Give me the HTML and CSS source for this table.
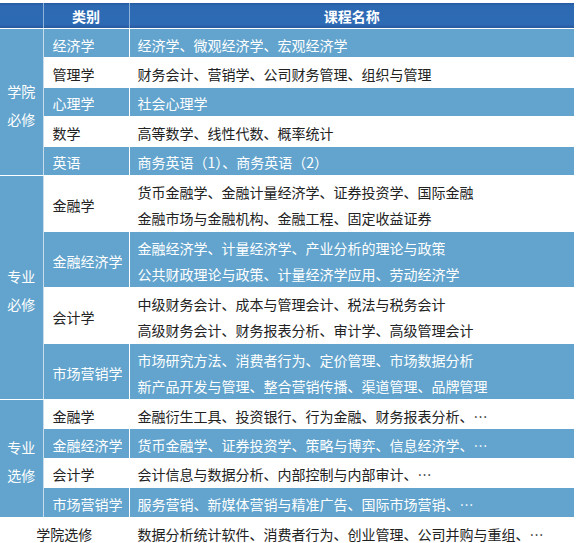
FILE: index.html
```html
<!DOCTYPE html>
<html lang="zh-CN">
<head>
<meta charset="utf-8">
<link rel="stylesheet" href="styles.css">
</head>
<body>
<table class="courses">
  <colgroup>
    <col class="c1"><col class="c2"><col class="c3">
  </colgroup>
  <thead>
    <tr class="head">
      <th></th><th>类别</th><th>课程名称</th>
    </tr>
  </thead>
  <tbody>
    <tr class="blue one">
      <td class="group" rowspan="5">学院<br>必修</td>
      <td class="cat">经济学</td><td class="list">经济学、微观经济学、宏观经济学</td>
    </tr>
    <tr class="white one">
      <td class="cat">管理学</td><td class="list">财务会计、营销学、公司财务管理、组织与管理</td>
    </tr>
    <tr class="blue one">
      <td class="cat">心理学</td><td class="list">社会心理学</td>
    </tr>
    <tr class="white one">
      <td class="cat">数学</td><td class="list">高等数学、线性代数、概率统计</td>
    </tr>
    <tr class="blue one">
      <td class="cat">英语</td><td class="list">商务英语（1）、商务英语（2）</td>
    </tr>

    <tr class="white two">
      <td class="group" rowspan="4">专业<br>必修</td>
      <td class="cat">金融学</td><td class="list">货币金融学、金融计量经济学、证券投资学、国际金融<br>金融市场与金融机构、金融工程、固定收益证券</td>
    </tr>
    <tr class="blue two">
      <td class="cat">金融经济学</td><td class="list">金融经济学、计量经济学、产业分析的理论与政策<br>公共财政理论与政策、计量经济学应用、劳动经济学</td>
    </tr>
    <tr class="white two">
      <td class="cat">会计学</td><td class="list">中级财务会计、成本与管理会计、税法与税务会计<br>高级财务会计、财务报表分析、审计学、高级管理会计</td>
    </tr>
    <tr class="blue two">
      <td class="cat">市场营销学</td><td class="list">市场研究方法、消费者行为、定价管理、市场数据分析<br>新产品开发与管理、整合营销传播、渠道管理、品牌管理</td>
    </tr>

    <tr class="white one">
      <td class="group" rowspan="4">专业<br>选修</td>
      <td class="cat">金融学</td><td class="list">金融衍生工具、投资银行、行为金融、财务报表分析、…</td>
    </tr>
    <tr class="blue one">
      <td class="cat">金融经济学</td><td class="list">货币金融学、证券投资学、策略与博弈、信息经济学、…</td>
    </tr>
    <tr class="white one">
      <td class="cat">会计学</td><td class="list">会计信息与数据分析、内部控制与内部审计、…</td>
    </tr>
    <tr class="blue one">
      <td class="cat">市场营销学</td><td class="list">服务营销、新媒体营销与精准广告、国际市场营销、…</td>
    </tr>

    <tr class="white one last">
      <td class="span" colspan="2">学院选修</td><td class="list">数据分析统计软件、消费者行为、创业管理、公司并购与重组、…</td>
    </tr>
  </tbody>
</table>
</body>
</html>
```

FILE: styles.css
```css
html, body {
  margin: 0;
  padding: 0;
  background: #ffffff;
}

body {
  padding-top: 3px;
  font-family: "Noto Sans CJK SC", "Noto Sans", sans-serif;
  font-size: 14px;
}

.courses {
  width: 574px;
  border-collapse: collapse;
  table-layout: fixed;
}

.c1 { width: 43px; }
.c2 { width: 86px; }
.c3 { width: 445px; }

.courses th,
.courses td {
  padding: 0;
  border: 1px solid #ffffff;
  vertical-align: middle;
}

.head th {
  height: 25px;
  color: #ffffff;
  font-weight: bold;
  font-size: 14px;
  text-align: center;
  line-height: 20px;
  background: linear-gradient(#245a9f 0, #2d69b3 12%, #2e6bb5 85%, #26599c 100%);
  border-top: none;
  border-color: #8fb3d8;
  border-bottom: 1px solid #ffffff;
}

.head th:first-child { border-left: none; }
.head th:last-child { border-right: none; }

.blue td {
  background: #62a4cd;
  color: #ffffff;
}

.white td {
  background: #ffffff;
  color: #222222;
}

.white td.cat,
.white td.list,
.white td.span {
  border-left-color: #d3e1eb;
}

.one td {
  height: 25.4px;
  line-height: 20px;
  padding-top: 3px;
}

.two td {
  height: 52px;
  line-height: 26px;
  padding-top: 3px;
}

.courses td.group {
  background: #62a4cd;
  color: #ffffff;
  text-align: center;
  line-height: 28px;
  height: auto;
  padding-top: 6px;
  border-left: none;
  border-top: 1px solid #ffffff;
  border-right: 1px solid #c9dceb;
}

.cat {
  padding-left: 9px !important;
  white-space: nowrap;
}

.list {
  padding-left: 8px !important;
  white-space: nowrap;
  border-right: none !important;
}

.span {
  text-align: center;
  border-left: none !important;
}

.courses .last td {
  height: 27px;
  border-bottom: none;
}
```
